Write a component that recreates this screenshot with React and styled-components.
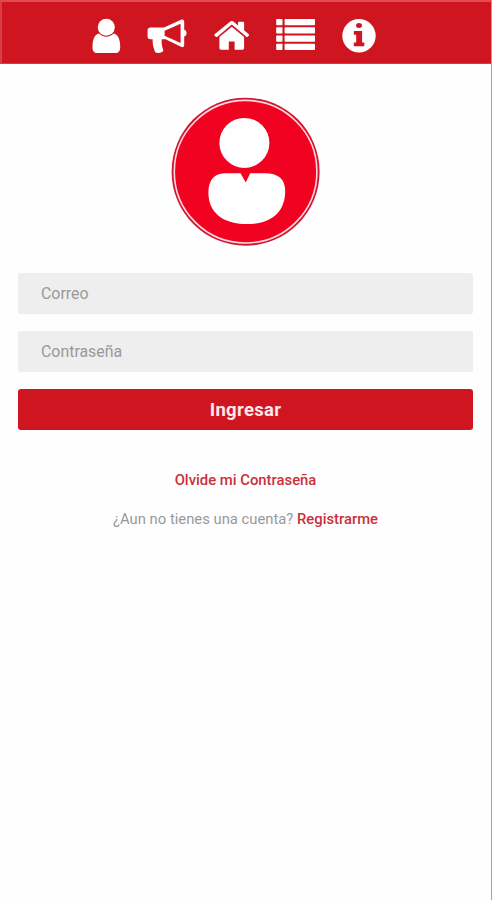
import { useState } from 'react'
import styled, { createGlobalStyle } from 'styled-components';


function App() {

    const [email, setEmail] = useState('');
    const [password, setPassword] = useState('');

  return (
    <>
      <GlobalStyle />
      <Screen>
        <Navbar>
          <NavButton $width={29} aria-label="Perfil"><UserIcon /></NavButton>
          <NavButton $width={40} aria-label="Anuncios"><MegaphoneIcon /></NavButton>
          <NavButton $width={37} aria-label="Inicio"><HomeIcon /></NavButton>
          <NavButton $width={40} aria-label="Lista"><ListIcon /></NavButton>
          <NavButton $width={34} aria-label="Información"><InfoIcon /></NavButton>
        </Navbar>
        <Content>
          <Avatar />
          <Form onSubmit={(e) => e.preventDefault()}>
            <Input
              type="email"
              placeholder="Correo"
              value={email}
              onChange={(e) => setEmail(e.target.value)}
            />
            <Input
              type="password"
              placeholder="Contraseña"
              value={password}
              onChange={(e) => setPassword(e.target.value)}
            />
            <Submit type="submit">Ingresar</Submit>
          </Form>
          <Forgot href="#">Olvide mi Contraseña</Forgot>
          <Register>
            ¿Aun no tienes una cuenta? <RegisterLink href="#">Registrarme</RegisterLink>
          </Register>
        </Content>
      </Screen>
    </>
  )
}

const UserIcon = () => (
  <svg width="29" height="36" viewBox="0 0 29 36" fill="#fff">
    <path d="M7 15.6C2.5 16.6 0.5 21.5 0.5 29C0.5 33 2 35 5.5 35H23.1C26.7 35 28.2 33 28.2 29C28.2 21.5 26.2 16.6 21.7 15.6C19.8 17.7 17.2 18.7 14.4 18.7C11.5 18.7 8.9 17.7 7 15.6Z" />
    <circle cx="14.3" cy="9.3" r="8.5" />
  </svg>
)

const MegaphoneIcon = () => (
  <svg width="40" height="36" viewBox="0 0 40 36" fill="#fff">
    <path
      fillRule="evenodd"
      d="M3.3 9.4H17L34 1.8C36 1 37.2 2 37.2 4V11.8C40.4 12.8 40.4 17.6 37.2 18.4V26.8C37.2 28.8 35.9 29.7 34 28.8L18.5 21.2H14.8C14.4 25 14.9 28.5 16.4 32.6C15.4 35.3 10.3 35.8 8 34C6.6 29.8 5.3 26.2 5.7 21.2H3.3C1.6 21.2 0.6 20.2 0.6 18.4V12.2C0.6 10.4 1.6 9.4 3.3 9.4ZM17.6 12.8V17.7L33.6 25.1V5.8Z"
    />
  </svg>
)

const HomeIcon = () => (
  <svg width="37" height="36" viewBox="0 0 37 36" fill="#fff">
    <path d="M18.8 8.8L31.1 19V30.1C31.1 31.1 30.5 31.8 29.4 31.8H21.6V23.5H15.8V31.8H8.1C7 31.8 6.4 31.1 6.4 30.1V19Z" />
    <path d="M16.7 3.9C18 2.8 19.6 2.8 20.9 3.9L25.1 7.4V4.6C25.1 4.1 25.4 3.8 25.9 3.8H30.2C30.7 3.8 31.1 4.1 31.1 4.6V12.3L35.8 16.3C36.2 16.6 36.2 17 35.9 17.4L34.7 18.8C34.4 19.2 34 19.2 33.6 18.9L18.8 6.6L4 18.9C3.6 19.2 3.1 19.2 2.8 18.8L1.5 17.4C1.2 17 1.2 16.6 1.6 16.3Z" />
  </svg>
)

const ListIcon = () => (
  <svg width="40" height="36" viewBox="0 0 40 36" fill="#fff">
    {[1, 9.2, 17.4, 25.7].map((y) => (
      <g key={y}>
        <rect x="0.2" y={y} width="6.3" height="6.3" rx="0.7" />
        <rect x="8.6" y={y} width="30.4" height="6.3" rx="0.7" />
      </g>
    ))}
  </svg>
)

const InfoIcon = () => (
  <svg width="34" height="36" viewBox="0 0 34 36">
    <circle cx="17" cy="17.8" r="16.7" fill="#fff" />
    <g fill="#cf1520">
      <ellipse cx="17" cy="7.6" rx="3" ry="2.5" />
      <path d="M11.8 13H20.1V24.6H22.3V28.3H11.8V24.6H14.2V16.7H11.8Z" />
    </g>
  </svg>
)

const Avatar = () => (
  <svg width="150" height="150" viewBox="0 0 150 150">
    <circle cx="74.6" cy="74.7" r="74" fill="#d01634" />
    <circle cx="74.6" cy="74.7" r="71.3" fill="#f00220" stroke="#ffd9dd" strokeWidth="1.6" />
    <circle cx="73.4" cy="45.9" r="25" fill="#fff" />
    <path
      fill="#fff"
      d="M55 76.2H69.5L74.8 85.5L79.2 76.2H94C107 76.2 114.2 82 114.2 93.7C114.2 114.7 101 127 75.7 127C51 127 37.4 114.7 37.4 95.7C37.4 82 44 76.2 55 76.2Z"
    />
  </svg>
)

const GlobalStyle = createGlobalStyle`
  * {
    box-sizing: border-box;
  }
  body {
    margin: 0;
    background: #fefefe;
    font-family: Roboto, sans-serif;
  }
`;

const Screen = styled.div`
  min-height: 100vh;
  border-right: 1px solid #a2a2a2;
`;

const Navbar = styled.nav`
  display: flex;
  align-items: flex-start;
  gap: 26px;
  height: 64px;
  padding: 16px 0 0 90px;
  background: #cf1520;
  border-top: 2px solid #e24a54;
  border-left: 2px solid #d93d47;
  border-bottom: 1px solid #dc3942;
`;

const NavButton = styled.button`
  display: flex;
  width: ${(props) => props.$width}px;
  height: 36px;
  padding: 0;
  border: none;
  background: none;
  cursor: pointer;
`;

const Content = styled.main`
  display: flex;
  flex-direction: column;
  align-items: center;
  padding: 33px 18px 0;
`;

const Form = styled.form`
  display: flex;
  flex-direction: column;
  gap: 17px;
  width: 100%;
  margin-top: 26px;
`;

const Input = styled.input`
  width: 100%;
  height: 41px;
  padding: 0 23px;
  border: none;
  border-radius: 2px;
  background: #eeeeee;
  color: #555;
  font-family: inherit;
  font-size: 15.9px;
  outline: none;
  &::placeholder {
    color: #999;
    opacity: 1;
  }
`;

const Submit = styled.button`
  height: 41px;
  padding: 0;
  border: none;
  border-radius: 3px;
  background: #cf1520;
  color: #fbe6e8;
  font-family: inherit;
  font-size: 18.5px;
  font-weight: 700;
  letter-spacing: 0.3px;
  cursor: pointer;
`;

const Forgot = styled.a`
  margin-top: 40px;
  color: #c9303c;
  font-size: 14.85px;
  font-weight: 500;
  line-height: 20px;
  text-decoration: none;
`;

const Register = styled.p`
  margin: 19px 0 0;
  color: #999;
  font-size: 14.8px;
  line-height: 20px;
`;

const RegisterLink = styled.a`
  color: #c9303c;
  font-weight: 500;
  text-decoration: none;
`;

export default App
